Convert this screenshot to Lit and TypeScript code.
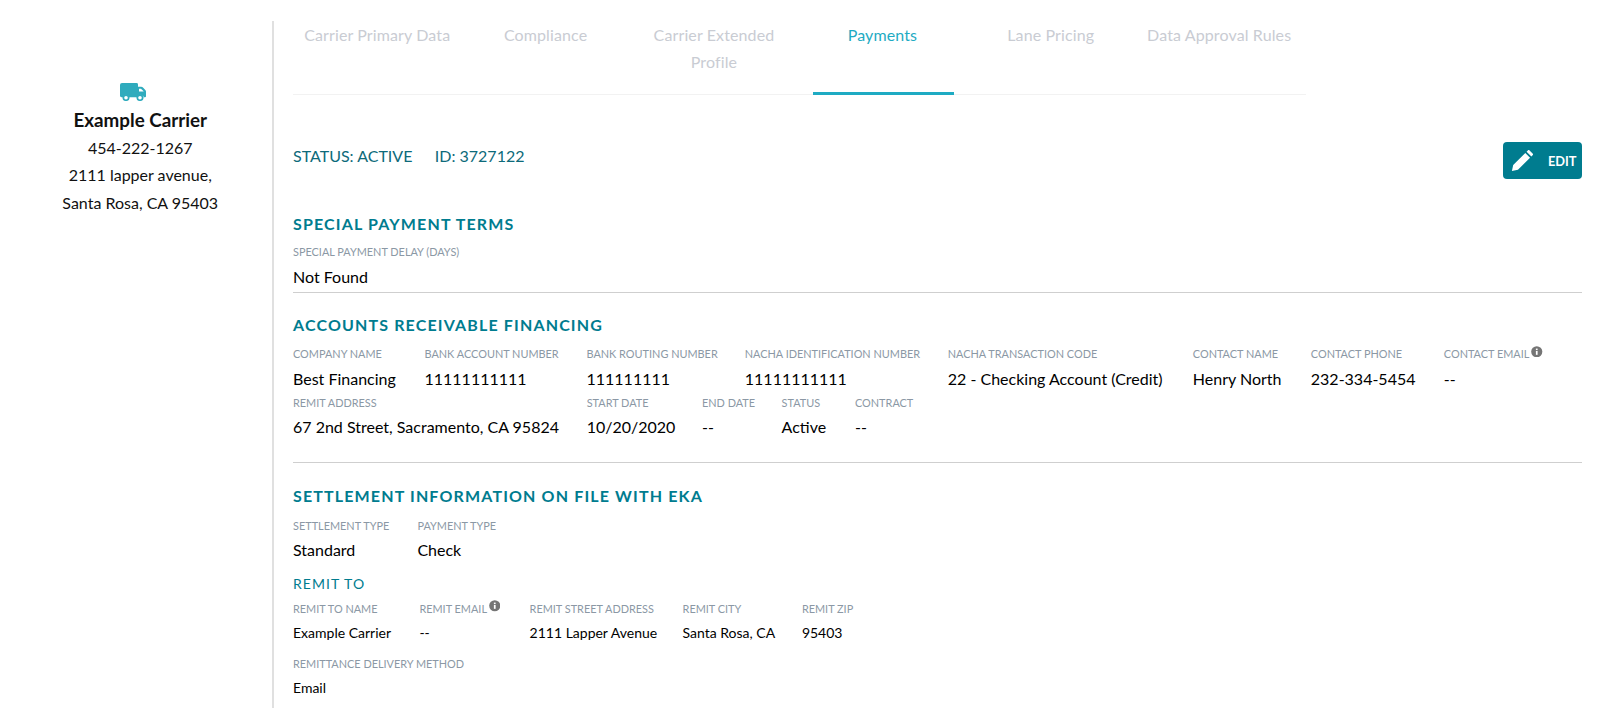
import { LitElement, html, css } from "lit";
import { customElement } from "lit/decorators.js";

const info = html`<svg class="info" viewBox="0 0 12 12"><circle cx="6" cy="6" r="5.8" fill="#757575"/><rect x="5.1" y="5.2" width="1.8" height="4" fill="#fff"/><rect x="5.1" y="2.7" width="1.8" height="1.6" fill="#fff"/></svg>`;

@customElement("app-root")
export class AppRoot extends LitElement {
  static styles = css`
    :host { display: block; width: 1600px; height: 708px; overflow: hidden; background: #fff; font-family: Lato, "Open Sans", sans-serif; color: #000; box-sizing: border-box; padding-top: 21px; }
    .page { display: flex; height: 687px; }
    .side { width: 271.5px; flex: none; display: flex; flex-direction: column; align-items: center; padding: 62px 0 0 9px; box-sizing: border-box; font-size: 16px; line-height: 27.5px; color: #111; }
    .truck { width: 26px; height: 18px; margin: 0 14.6px 5.25px 0; display: block; }
    .side b { font-size: 18.8px; font-weight: 700; line-height: 27.5px; color: #111; }
    .main { flex: none; width: 1310px; border-left: 2px solid #e0e0e0; padding-left: 19.5px; box-sizing: border-box; }
    .tabs { display: flex; width: 1013px; height: 73px; border-bottom: 1px solid #f2f2f2; }
    .tab { width: 168.4px; flex: none; box-sizing: border-box; padding: 0 7px; text-align: center; font-size: 16px; letter-spacing: 0.12px; line-height: 27px; color: #c9ccd3; position: relative; height: 73px; }
    .tab.on { color: #1eabc3; }
    .tab.on::after { content: ""; position: absolute; left: 15px; right: 12.6px; bottom: -1px; height: 3px; background: #1eabc3; }
    .head { display: flex; justify-content: space-between; align-items: flex-start; height: 60.5px; padding-top: 47px; }
    .status { display: flex; gap: 22.4px; font-size: 16px; line-height: 28px; color: #0d6a7a; }
    .edit { display: flex; align-items: center; justify-content: space-between; box-sizing: border-box; width: 79px; height: 37px; background: #007c8f; border-radius: 4px; color: #fff; font-size: 12.8px; font-weight: 700; padding: 0 5px 0 8px; }
    .edit svg { width: 22px; height: 22px; }
    h2 { margin: 0; font-size: 16px; line-height: 20px; font-weight: 700; letter-spacing: 1.15px; color: #007c8f; }
    .sec1 { padding-top: 11px; height: 78px; border-bottom: 1px solid #cfcfcf; }
    .sec2 { padding-top: 22px; height: 147.5px; border-bottom: 1px solid #cfcfcf; }
    .sec3 { padding-top: 23px; }
    .row { display: flex; gap: 28px; }
    .f { display: flex; flex-direction: column; }
    .l { font-size: 10.9px; line-height: 14px; color: #8b98a5; white-space: nowrap; text-transform: uppercase; display: flex; }
    .v { font-size: 16px; line-height: 24px; white-space: nowrap; margin-top: 6px; }
    .sec1 .l { margin-top: 11.5px; }
    .sec1 .v { margin-top: 5.5px; }
    .sec2 .row.a { margin-top: 12.5px; }
    .sec2 .row.a .v { margin-top: 5.5px; }
    .sec2 .row.b { margin-top: 5.5px; }
    .sec2 .row.b .v { margin-top: 5px; }
    .sec3 .row.a { margin-top: 12.5px; }
    .sec3 .row.a .v { margin-top: 5.5px; }
    h3 { margin: 12px 0 0; font-size: 14px; line-height: 20px; font-weight: 400; letter-spacing: 1.05px; color: #007c8f; }
    .sm .v { font-size: 14px; line-height: 20px; margin-top: 7.5px; }
    .sm .row { margin-top: 7.5px; }
    .sm .one { margin-top: 14px; }
    .sm .one .v { margin-top: 7px; }
    .info { width: 11.5px; height: 11.5px; margin-top: -1.5px; margin-left: 2px; flex: none; }
  `;

  private f(l: unknown, v: string, w?: number) {
    return html`<div class="f" style=${w ? `width:${w}px` : ""}><div class="l">${l}</div><div class="v">${v}</div></div>`;
  }

  render() {
    return html`<div class="page">
      <aside class="side">
        <svg class="truck" viewBox="0 0 26 19" preserveAspectRatio="none"><path fill="#2fabbd" d="M2 0h14.5a1.5 1.5 0 0 1 1.5 1.5V4h3.2c.6 0 1.1.2 1.5.6l2.6 2.7c.4.4.7 1 .7 1.6V14a1 1 0 0 1-1 1h-1a3.3 3.3 0 0 0-6.5 0H9.2a3.3 3.3 0 0 0-6.5 0H1.5A1.5 1.5 0 0 1 0 13.5V2a2 2 0 0 1 2-2z"/><path fill="#fff" d="M19 6h2l2.6 2.6V9H19z"/><circle cx="6" cy="15.5" r="2.7" fill="#fff" stroke="#2fabbd" stroke-width="1.8"/><circle cx="20" cy="15.5" r="2.7" fill="#fff" stroke="#2fabbd" stroke-width="1.8"/></svg>
        <b>Example Carrier</b>
        <div>454-222-1267</div>
        <div>2111 lapper avenue,</div>
        <div>Santa Rosa, CA 95403</div>
      </aside>
      <main class="main">
        <nav class="tabs">
          <div class="tab">Carrier Primary Data</div>
          <div class="tab">Compliance</div>
          <div class="tab">Carrier Extended Profile</div>
          <div class="tab on">Payments</div>
          <div class="tab">Lane Pricing</div>
          <div class="tab">Data Approval Rules</div>
        </nav>
        <div class="head">
          <div class="status"><span>STATUS: ACTIVE</span><span>ID: 3727122</span></div>
          <div class="edit"><svg viewBox="0 0 24 24"><path fill="#fff" d="M1 23l1.4-6.6L15.6 3.2l5.2 5.2L7.6 21.6 1 23zM17 1.8l1.6-1.6a1 1 0 0 1 1.4 0l3.8 3.8a1 1 0 0 1 0 1.4L22.2 7 17 1.8z"/></svg><span>EDIT</span></div>
        </div>
        <section class="sec1">
          <h2>SPECIAL PAYMENT TERMS</h2>
          <div class="f"><div class="l">Special Payment Delay (Days)</div><div class="v">Not Found</div></div>
        </section>
        <section class="sec2">
          <h2>ACCOUNTS RECEIVABLE FINANCING</h2>
          <div class="row a">
            ${this.f("Company Name", "Best Financing", 103.5)}
            ${this.f("Bank Account Number", "11111111111", 134)}
            ${this.f("Bank Routing Number", "111111111", 130.3)}
            ${this.f("Nacha Identification Number", "11111111111", 175)}
            ${this.f("Nacha Transaction Code", "22 - Checking Account (Credit)", 217)}
            ${this.f("Contact Name", "Henry North", 90)}
            ${this.f("Contact Phone", "232-334-5454", 105)}
            ${this.f(html`Contact Email${info}`, "--")}
          </div>
          <div class="row b">
            ${this.f("Remit Address", "67 2nd Street, Sacramento, CA 95824", 265.7)}
            ${this.f("Start Date", "10/20/2020", 87.3)}
            ${this.f("End Date", "--", 51.6)}
            ${this.f("Status", "Active", 45.4)}
            ${this.f("Contract", "--")}
          </div>
        </section>
        <section class="sec3">
          <h2>SETTLEMENT INFORMATION ON FILE WITH EKA</h2>
          <div class="row a">
            ${this.f("Settlement Type", "Standard", 96.4)}
            ${this.f("Payment Type", "Check")}
          </div>
          <div class="sm">
            <h3>REMIT TO</h3>
            <div class="row">
              ${this.f("Remit To Name", "Example Carrier", 98.4)}
              ${this.f(html`Remit Email${info}`, "--", 82.2)}
              ${this.f("Remit Street Address", "2111 Lapper Avenue", 125)}
              ${this.f("Remit City", "Santa Rosa, CA", 91.3)}
              ${this.f("Remit Zip", "95403")}
            </div>
            <div class="f one"><div class="l">Remittance Delivery Method</div><div class="v">Email</div></div>
          </div>
        </section>
      </main>
    </div>`;
  }
}
